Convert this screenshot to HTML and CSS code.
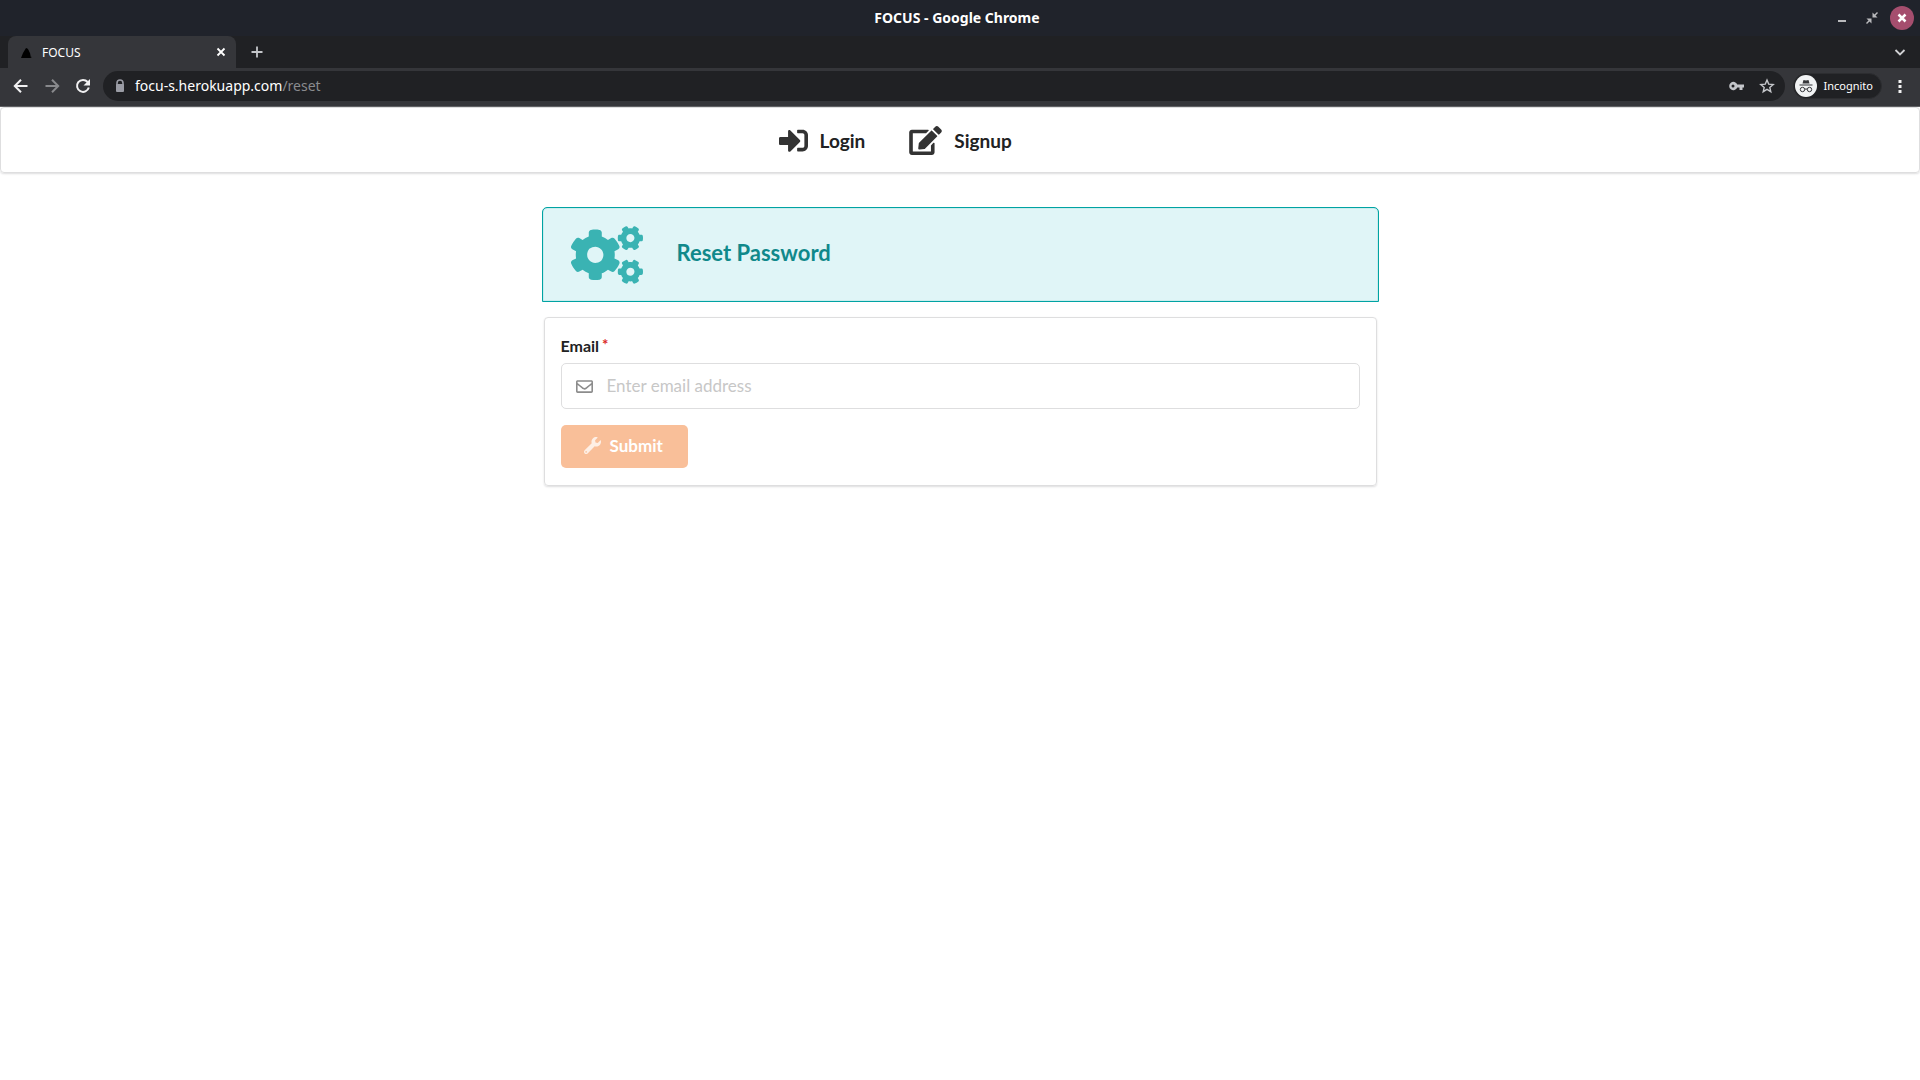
FILE: index.html
```html
<!DOCTYPE html>
<html lang="en">
<head>
<meta charset="utf-8">
<title>FOCUS</title>
<link rel="stylesheet" href="styles.css">
</head>
<body>
<header class="browser">
  <div class="titlebar">
    <span class="window-title">FOCUS - Google Chrome</span>
    <div class="window-controls">
      <button class="icon-button" aria-label="Minimize"><svg width="24" height="24" viewBox="0 0 24 24"><path d="M8 14h8v2H8z" fill="#b9babd"/></svg></button>
      <button class="icon-button" aria-label="Restore"><svg width="24" height="24" viewBox="0 0 24 24"><path d="M12.5 11.5V6.500l2 2 2.500-2.500 1 1-2.500 2.500 2 2zM11.500 12.500H6.500l2 2L6 17l1 1 2.500-2.500 2 2z" fill="#b9babd"/></svg></button>
      <button class="icon-button close-window" aria-label="Close"><svg width="24" height="24" viewBox="0 0 24 24"><path d="M8.500 8.500l7 7M15.500 8.500l-7 7" stroke="#fff" stroke-width="2.500"/></svg></button>
    </div>
  </div>
  <div class="tabstrip">
    <div class="tab">
      <svg class="favicon" width="16" height="16" viewBox="0 0 16 16"><path d="M3 14l2-5 3-5c2 0 3 3 4 5l1 5z" fill="#000"/><path d="M13 12l1 2h-1z" fill="#222"/></svg>
      <span class="tab-title">FOCUS</span>
      <button class="icon-button" aria-label="Close tab"><svg width="16" height="16" viewBox="0 0 16 16"><path d="M4.500 4.500l7 7M11.500 4.500l-7 7" stroke="#fff" stroke-width="1.800"/></svg></button>
    </div>
    <button class="icon-button new-tab" aria-label="New tab"><svg width="16" height="16" viewBox="0 0 16 16"><path d="M8 2.500v11M2.500 8h11" stroke="#c4c6ca" stroke-width="1.800"/></svg></button>
    <button class="icon-button tab-search" aria-label="Search tabs"><svg width="16" height="16" viewBox="0 0 16 16"><path d="M3.500 6L8 10.500 12.500 6" fill="none" stroke="#d0d1d4" stroke-width="1.800"/></svg></button>
  </div>
  <div class="toolbar">
    <div class="history">
      <button class="icon-button" aria-label="Back"><svg width="16" height="16" viewBox="0 0 16 16"><path d="M14.500 8H2.500M8 1.800L1.800 8 8 14.200" fill="none" stroke="#f1f1f2" stroke-width="2"/></svg></button>
      <button class="icon-button" aria-label="Forward"><svg width="16" height="16" viewBox="0 0 16 16"><path d="M1.500 8h12M8 1.800L14.200 8 8 14.200" fill="none" stroke="#88898c" stroke-width="2"/></svg></button>
      <button class="icon-button" aria-label="Reload"><svg width="16" height="16" viewBox="0 0 16 16"><path d="M12.600 4A6 6 0 1 0 13.800 9.500" fill="none" stroke="#f1f1f2" stroke-width="2"/><path d="M15 1v6.500H8.500z" fill="#f1f1f2"/></svg></button>
    </div>
    <div class="omnibox">
      <svg class="lock" width="16" height="16" viewBox="0 0 16 16"><path d="M5 7V5a3 3 0 0 1 6 0v2" fill="none" stroke="#9a9ca5" stroke-width="1.600"/><rect x="4" y="6" width="8" height="8" rx="1" fill="#9a9ca5"/></svg>
      <div class="url">focu-s.herokuapp.com<span class="url-path">/reset</span></div>
      <button class="icon-button" aria-label="Passwords"><svg width="16" height="16" viewBox="0 0 16 16"><path fill-rule="evenodd" d="M8.300 6.500H15v3h-1.500v2.500h-3V9.500H8.300A4.200 4.200 0 1 1 8.300 6.500zM5.500 8a1.500 1.500 0 1 0-3 0 1.500 1.500 0 0 0 3 0z" fill="#c4c6ca"/></svg></button>
      <button class="icon-button" aria-label="Bookmark"><svg width="16" height="16" viewBox="0 0 16 16"><path d="M8 2l1.700 4.100 4.500.4-3.400 2.900 1 4.300L8 11.400l-3.800 2.300 1-4.300L1.800 6.500l4.500-.4z" fill="none" stroke="#c4c6ca" stroke-width="1.400"/></svg></button>
    </div>
    <div class="incognito">
      <svg width="22" height="22" viewBox="0 0 22 22"><circle cx="11" cy="11" r="11" fill="#f1f3f4"/><path d="M7.500 8.500L8.500 5l2.500.6 2.500-.6 1 3.500zM4.500 9.500h13v1h-13z" fill="#35363a"/><g fill="none" stroke="#35363a"><circle cx="7.500" cy="14.500" r="2.200"/><circle cx="14.500" cy="14.500" r="2.200"/><path d="M9.700 14.300q1.300-.8 2.600 0"/></g></svg>
      <span>Incognito</span>
    </div>
    <button class="icon-button" aria-label="Menu"><svg width="16" height="16" viewBox="0 0 16 16"><path d="M6.500 2h3v3h-3zM6.500 7h3v3h-3zM6.500 12h3v3h-3z" fill="#f1f1f2"/></svg></button>
  </div>
</header>
<nav class="menu">
  <div class="menu-items">
    <a class="menu-link" href="#login"><svg width="29" height="29" viewBox="0 0 512 512" fill="#333"><path d="M416 448h-84c-6.600 0-12-5.400-12-12v-40c0-6.600 5.400-12 12-12h84c17.700 0 32-14.300 32-32V160c0-17.700-14.300-32-32-32h-84c-6.600 0-12-5.400-12-12V76c0-6.600 5.400-12 12-12h84c53 0 96 43 96 96v192c0 53-43 96-96 96zm-47-201L201 79c-15-15-41-4.500-41 17v96H24c-13.300 0-24 10.700-24 24v96c0 13.300 10.700 24 24 24h136v96c0 21.500 26 32 41 17l168-168c9.300-9.400 9.300-24.600 0-34z"/></svg><span class="menu-text">Login</span></a>
    <a class="menu-link" href="#signup"><svg width="33" height="29" viewBox="0 0 576 512" fill="#333"><path d="M402.600 83.200l90.200 90.200c3.800 3.800 3.800 10 0 13.800L274.400 405.600l-92.800 10.300c-12.400 1.400-22.900-9.100-21.500-21.500l10.300-92.800L388.800 83.200c3.800-3.800 10-3.800 13.800 0zm162-22.900l-48.800-48.800c-15.200-15.200-39.900-15.200-55.200 0l-35.400 35.400c-3.800 3.800-3.800 10 0 13.800l90.200 90.200c3.800 3.800 10 3.800 13.800 0l35.400-35.400c15.200-15.300 15.200-40 0-55.200zM384 346.200V448H64V128h229.800c3.200 0 6.200-1.300 8.500-3.500l40-40c7.600-7.600 2.200-20.500-8.500-20.500H48C21.500 64 0 85.500 0 112v352c0 26.500 21.500 48 48 48h352c26.500 0 48-21.500 48-48V306.200c0-10.700-12.900-16-20.500-8.500l-40 40c-2.200 2.300-3.500 5.300-3.500 8.500z"/></svg><span class="menu-text">Signup</span></a>
  </div>
</nav>
<main class="content">
  <section class="message">
    <svg width="72" height="58" viewBox="0 0 640 512" fill="#3ab3b3">
      <path id="cog" d="M512.100 191l-8.200 14.300c-3 5.300-9.400 7.500-15.100 5.400-11.800-4.400-22.600-10.700-32.100-18.600-4.600-3.800-5.800-10.500-2.800-15.700l8.200-14.300c-6.900-8-12.300-17.300-15.900-27.400h-16.500c-6 0-11.200-4.300-12.200-10.300-2-12-2.100-24.600 0-37.100 1-6 6.200-10.400 12.200-10.400h16.500c3.600-10.100 9-19.400 15.900-27.400l-8.200-14.300c-3-5.200-1.900-11.900 2.800-15.700 9.500-7.900 20.400-14.200 32.100-18.600 5.700-2.100 12.100.1 15.100 5.400l8.200 14.300c10.500-1.900 21.200-1.900 31.700 0L552 6.300c3-5.300 9.400-7.500 15.100-5.400 11.800 4.400 22.600 10.700 32.100 18.600 4.600 3.800 5.800 10.500 2.800 15.700l-8.200 14.300c6.900 8 12.300 17.300 15.900 27.400h16.500c6 0 11.200 4.300 12.200 10.300 2 12 2.100 24.600 0 37.100-1 6-6.200 10.400-12.200 10.400h-16.500c-3.600 10.100-9 19.400-15.900 27.400l8.200 14.300c3 5.200 1.900 11.900-2.800 15.700-9.500 7.900-20.400 14.200-32.100 18.600-5.700 2.100-12.100-.1-15.100-5.400l-8.200-14.300c-10.400 1.900-21.200 1.900-31.700 0zm-10.500-58.800c38.500 29.600 82.400-14.300 52.800-52.800-38.500-29.700-82.400 14.300-52.800 52.800z"/>
      <use href="#cog" y="299"/>
      <path d="M386.300 286.100l33.700 16.800c10.100 5.800 14.500 18.100 10.500 29.100-8.900 24.200-26.400 46.400-42.600 65.800-7.400 8.900-20.200 11.100-30.300 5.300l-29.100-16.800c-16 13.700-34.600 24.600-54.900 31.700v33.600c0 11.600-8.300 21.600-19.700 23.600-24.600 4.200-50.400 4.400-75.900 0-11.500-2-20-11.900-20-23.600V418c-20.300-7.200-38.900-18-54.900-31.700L74 403c-10 5.800-22.900 3.600-30.300-5.300-16.200-19.400-33.300-41.600-42.200-65.700-4-10.900.4-23.200 10.500-29.100l33.300-16.800c-3.900-20.900-3.900-42.400 0-63.400L12 205.800c-10.100-5.800-14.600-18.100-10.500-29 8.900-24.200 26-46.400 42.200-65.800 7.400-8.900 20.200-11.100 30.300-5.300l29.100 16.800c16-13.700 34.600-24.600 54.900-31.700V57.100c0-11.500 8.200-21.500 19.600-23.500 24.600-4.200 50.500-4.400 76-.1 11.500 2 20 11.900 20 23.600v33.600c20.300 7.200 38.900 18 54.900 31.700l29.100-16.800c10-5.800 22.900-3.600 30.300 5.300 16.200 19.400 33.200 41.600 42.100 65.800 4 10.900.1 23.200-10 29.100l-33.700 16.800c3.900 21 3.900 42.500 0 63.500zm-117.600 21.100c59.200-77-28.700-164.900-105.700-105.700-59.200 77 28.700 164.900 105.700 105.700z"/>
    </svg>
    <h1 class="message-title">Reset Password</h1>
  </section>
  <form class="segment">
    <label class="field-label" for="email">Email<span class="required">*</span></label>
    <div class="field">
      <svg width="17" height="17" viewBox="0 0 512 512" fill="#8c8c8c"><path d="M464 64H48C21.490 64 0 85.490 0 112v288c0 26.510 21.490 48 48 48h416c26.510 0 48-21.490 48-48V112c0-26.510-21.490-48-48-48zm0 48v40.805c-22.422 18.259-58.168 46.651-134.587 106.490-16.841 13.247-50.201 45.072-73.413 44.701-23.208.375-56.579-31.459-73.413-44.701C106.180 199.465 70.425 171.067 48 152.805V112h416zM48 400V214.398c22.914 18.251 55.409 43.862 104.938 82.646 21.857 17.205 60.134 55.186 103.062 54.955 42.717.231 80.509-37.199 103.053-54.947 49.528-38.783 82.032-64.401 104.947-82.653V400H48z"/></svg>
      <input class="email" id="email" type="email" placeholder="Enter email address">
    </div>
    <button class="submit" type="submit" disabled><svg width="17" height="17" viewBox="0 0 512 512" fill="#fff" fill-opacity=".75"><path d="M507.730 109.100c-2.240-9.030-13.540-12.090-20.120-5.510l-74.360 74.360-67.880-11.310-11.310-67.880 74.360-74.360c6.620-6.620 3.430-17.900-5.660-20.160-47.380-11.740-99.550.91-136.580 37.930-39.640 39.640-50.550 97.100-34.050 147.200L18.740 402.760c-24.990 24.990-24.990 65.510 0 90.500 24.990 24.990 65.510 24.990 90.500 0l213.210-213.210c50.120 16.710 107.470 5.680 147.370-34.220 37.070-37.070 49.700-89.320 37.910-136.730zM64 472c-13.250 0-24-10.750-24-24 0-13.260 10.750-24 24-24s24 10.740 24 24c0 13.250-10.750 24-24 24z"/></svg>Submit</button>
  </form>
</main>
</body>
</html>
```

FILE: styles.css
```css
* { box-sizing: border-box; }
body { margin: 0; background: #fff; color: #212223; font-family: Lato, sans-serif; }
svg { display: block; flex: none; }
button, input { font: inherit; }
.icon-button { display: block; flex: none; padding: 0; border: 0; background: none; }

/* Browser frame */
.browser { background: #35363a; border-bottom: 1px solid #606164; color: #fff; font-family: "Noto Sans", sans-serif; }
.titlebar { display: grid; grid-template-columns: 1fr auto 1fr; align-items: center; height: 36px; padding-right: 6px; background: #20232b; }
.window-title { grid-column: 2; font-size: 14px; font-weight: 700; line-height: 20px; }
.window-controls { display: flex; justify-content: flex-end; align-items: center; gap: 6px; }
.close-window { padding: 0; border-radius: 50%; background: #a54e6e; }
.tabstrip { display: flex; align-items: center; height: 32px; padding: 0 12px 0 8px; background: #202124; }
.tab { display: flex; align-items: center; gap: 8px; width: 228px; height: 32px; padding: 0 7px 0 10px; border-radius: 8px 8px 0 0; background: #35363a; }
.tab-title { flex: 1; padding-top: 2px; font-size: 12px; line-height: 18px; }
.new-tab { margin-left: 13px; }
.tab-search { margin-left: auto; }
.toolbar { display: flex; align-items: center; height: 38px; padding: 0 12px 2px 13px; }
.history { display: flex; gap: 15px; margin: 0 12px 0 0; }
.omnibox { display: flex; flex: 1; align-items: center; gap: 14px; height: 30px; padding: 0 10px 0 9px; border-radius: 15px; background: #202124; }
.lock { margin-right: -7px; }
.url { flex: 1; font-size: 14px; line-height: 20px; }
.url-path { color: #8a8b8e; }
.incognito { display: flex; align-items: center; gap: 7px; height: 26px; margin: 0 10px 0 8px; padding: 0 8px 0 1px; border: 1px solid #2c2d30; border-radius: 13px; background: #202124; font-size: 11px; line-height: 16px; }

/* Site navigation */
.menu { border: 1px solid #dededf; border-radius: 4px; box-shadow: 0 1px 2px rgba(34, 36, 38, .15); }
.menu-items { display: flex; gap: 44px; max-width: 837px; height: 64px; margin: 0 auto; padding-left: 237px; }
.menu-link { display: flex; align-items: center; gap: 12px; color: #212223; font-size: 19px; font-weight: 700; line-height: 24px; text-decoration: none; }
.menu-text { padding-top: 2px; }

/* Reset form */
.content { max-width: 837px; margin: 34px auto; }
.message { display: flex; align-items: center; gap: 34px; height: 95px; padding: 0 28px; border: 1px solid #00a3a3; border-radius: 5px 5px 0 0; background: #e0f5f7; box-shadow: inset 0 0 1px #00a3a3; }
.message-title { margin: 0; padding-bottom: 4px; color: #10898b; font-size: 22px; font-weight: 700; line-height: 28px; }
.segment { margin: 15px 2px 0; padding: 17px 16px; border: 1px solid #dededf; border-radius: 4px; box-shadow: 0 1px 2px rgba(34, 36, 38, .15); }
.field-label { display: flex; gap: 3px; margin-bottom: 6px; font-size: 16px; font-weight: 700; line-height: 22px; }
.required { color: #db2828; font-size: 15px; line-height: 18px; }
.field { display: flex; align-items: center; height: 46px; padding-left: 14px; border: 1px solid #dededf; border-radius: 5px; }
.email { flex: 1; height: 44px; padding: 0 14px 2px; border: 0; outline: 0; background: none; color: #212223; font-size: 17px; }
.email::placeholder { color: #c7c7c7; }
.submit { display: flex; align-items: center; gap: 9px; height: 43px; margin-top: 16px; padding: 0 25px 2px 23px; border: 0; border-radius: 5px; background: #f9bf99; color: #fff; font-size: 17px; font-weight: 700; line-height: 20px; }
```
